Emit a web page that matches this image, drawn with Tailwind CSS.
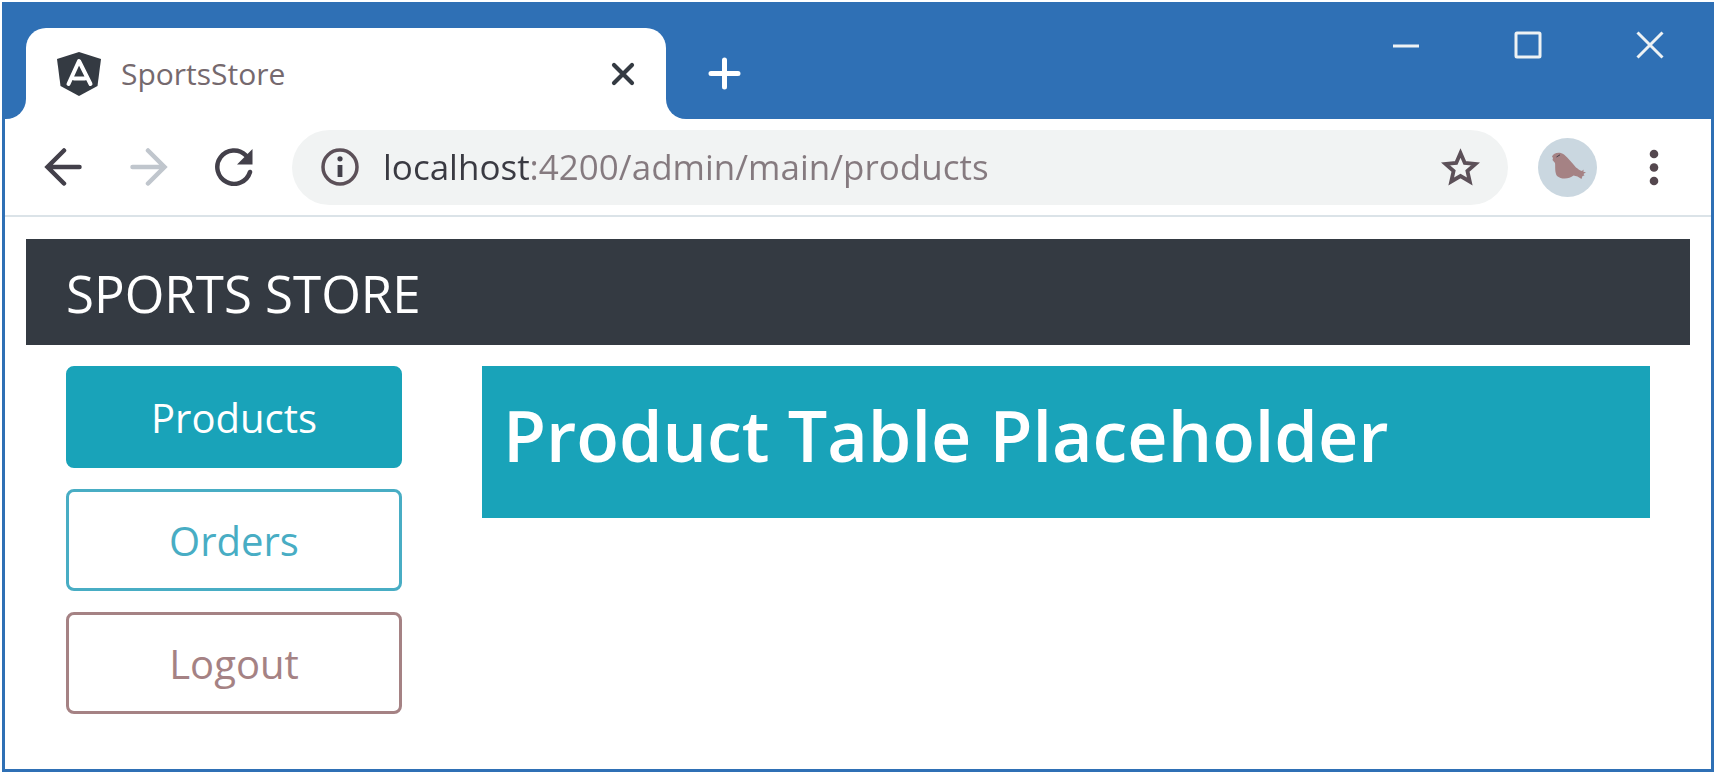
<!DOCTYPE html>
<html lang="en">
<head>
<meta charset="utf-8">
<meta name="viewport" content="width=device-width, initial-scale=1">
<title>SportsStore</title>
<script src="https://cdn.jsdelivr.net/npm/@tailwindcss/browser@4"></script>
</head>
<body class="flex min-h-screen bg-white p-[2px] font-['Open_Sans','Noto_Sans',sans-serif]">
<div class="flex grow flex-col border-3 border-[#2f70b5] bg-white">

  <!-- Title bar -->
  <header class="flex h-[114px] bg-[#2f70b5]">
    <div class="mt-[23px] w-[21px] shrink-0 bg-white"><div class="h-full rounded-br-[20px] bg-[#2f70b5]"></div></div>
    <div class="mt-[23px] flex w-[640px] items-center rounded-t-[20px] bg-white pr-[31px] pl-[31px]">
      <svg class="size-[44px] shrink-0" viewBox="0 0 44 44" aria-hidden="true">
        <path d="M22 0 44 7 40.500 34 22 44 3.500 34 0 7Z" fill="#343a42"/>
        <path d="M11.500 32 22 9 33.500 32M17 26.500H28" fill="none" stroke="#fff" stroke-width="4" stroke-linecap="round" stroke-linejoin="round"/>
      </svg>
      <span class="ml-5 grow text-[30px] leading-10 text-[#75696e]">SportsStore</span>
      <button type="button" aria-label="Close tab" class="shrink-0">
        <svg class="size-[24px]" viewBox="0 0 24 24"><path d="M3 3 21 21M21 3 3 21" stroke="#343a42" stroke-width="4.200" stroke-linecap="round"/></svg>
      </button>
    </div>
    <div class="grow bg-white">
      <div class="flex h-full items-start justify-between rounded-bl-[20px] bg-[#2f70b5]">
        <button type="button" aria-label="New tab" class="mt-[23px] ml-[42px] flex h-[91px] items-center">
          <svg class="size-[33px]" viewBox="0 0 33 33"><path d="M16.500 3V30M3 16.500H30" stroke="#fff" stroke-width="5" stroke-linecap="round"/></svg>
        </button>
        <div class="flex">
          <button type="button" aria-label="Minimize" class="flex h-20 w-[122px] items-center justify-center">
            <svg class="size-[28px]" viewBox="0 0 28 28"><path d="M1 15H27" stroke="#eef2f4" stroke-width="3"/></svg>
          </button>
          <button type="button" aria-label="Maximize" class="flex h-20 w-[122px] items-center justify-center">
            <svg class="size-[28px]" viewBox="0 0 28 28"><rect x="2" y="2" width="24" height="24" rx="1" fill="none" stroke="#eef2f4" stroke-width="3"/></svg>
          </button>
          <button type="button" aria-label="Close" class="flex h-20 w-[122px] items-center justify-center">
            <svg class="size-[28px]" viewBox="0 0 28 28"><path d="M1.500 1.500 26.500 26.500M26.500 1.500 1.500 26.500" stroke="#eef2f4" stroke-width="3"/></svg>
          </button>
        </div>
      </div>
    </div>
  </header>

  <!-- Toolbar -->
  <div class="flex h-[98px] items-center border-b-2 border-[#dbe3e8] pr-[52px] pl-[39px]">
    <button type="button" aria-label="Back" class="shrink-0">
      <svg class="size-[38px]" viewBox="0 0 38 38" fill="none" stroke="#43404a" stroke-width="4.500" stroke-linecap="round" stroke-linejoin="miter"><path d="M35.500 19H4M20 2.500 3.500 19 20 35.500"/></svg>
    </button>
    <button type="button" aria-label="Forward" class="ml-12 shrink-0">
      <svg class="size-[38px]" viewBox="0 0 38 38" fill="none" stroke="#c0c6cd" stroke-width="4.500" stroke-linecap="round"><path d="M2.500 19H34M18 2.500 34.500 19 18 35.500"/></svg>
    </button>
    <button type="button" aria-label="Reload" class="ml-[47px] shrink-0">
      <svg class="size-[38px]" viewBox="0 0 38 38"><path d="M35 24A16.700 16.700 0 1 1 31 7.500" fill="none" stroke="#43404a" stroke-width="4.500" stroke-linecap="round"/><path d="M37.500 1V16.500H22Z" fill="#43404a"/></svg>
    </button>
    <div class="ml-[39px] flex h-[75px] min-w-0 grow items-center rounded-full bg-[#f1f3f3] pr-[28px] pl-[29px]">
      <button type="button" aria-label="Site information" class="shrink-0">
        <svg class="size-[38px]" viewBox="0 0 38 38"><circle cx="19" cy="19" r="17" fill="none" stroke="#5c5058" stroke-width="3.500"/><circle cx="19" cy="10.800" r="2.600" fill="#43404a"/><path d="M19 17V29" stroke="#43404a" stroke-width="4.800"/></svg>
      </button>
      <input type="text" aria-label="Address" value="localhost:4200/admin/main/products" class="ml-6 min-w-0 grow bg-linear-to-r from-[#3a3a42] from-[148px] to-[#857a7f] to-[148px] bg-clip-text text-[35px] leading-[48px] text-transparent outline-none">
      <button type="button" aria-label="Bookmark" class="shrink-0">
        <svg class="size-[39px]" viewBox="0 0 39 39"><path d="M19.500 5 23.800 14.900 34.500 15.900 26.400 23 28.800 33.500 19.500 28 10.200 33.500 12.600 23 4.500 15.900 15.200 14.900Z" fill="none" stroke="#5c5058" stroke-width="3.800"/></svg>
      </button>
    </div>
    <button type="button" aria-label="Profile" class="ml-[30px] shrink-0">
      <svg class="size-[59px]" viewBox="0 0 59 59"><circle cx="29.500" cy="29.500" r="29.500" fill="#cad7e0"/><path d="M14 18.500C15.500 14.500 22 13.500 26 16.500C30.500 20 34 25 38 29.500C40 31 42 32.500 44 33L45.500 31.500L45.500 34L48 34L45.500 36L46.500 37.500L44.500 38L43.500 41L39.500 38.500L35.500 37.500C31 41.500 23 41.500 19 38C16.500 34 17.500 28 17 25L14.500 22L15 20Z" fill="#a58284"/><path d="M18.500 19 22 16.800" stroke="#43404a" stroke-width="1"/></svg>
    </button>
    <button type="button" aria-label="Menu" class="ml-[52px] shrink-0">
      <svg class="h-[38px] w-[10px]" viewBox="0 0 10 38" fill="#54474e"><circle cx="5" cy="6" r="4.300"/><circle cx="5" cy="19.500" r="4.300"/><circle cx="5" cy="33" r="4.300"/></svg>
    </button>
  </div>

  <!-- Admin page -->
  <div class="px-[21px] pt-[22px]">
    <div class="bg-[#343a42] px-10 pt-[22px] pb-5 text-[51px] leading-[64px] text-white"><a href="#">SPORTS STORE</a></div>
    <div class="mt-[21px] flex items-start gap-20 px-10">
      <nav aria-label="Admin" class="flex w-[336px] shrink-0 flex-col gap-[21px] text-[40px] leading-[56px]">
        <button type="button" class="rounded-lg border-3 border-[#19a3b9] bg-[#19a3b9] pt-[21px] pb-[19px] text-white">Products</button>
        <button type="button" class="rounded-lg border-3 border-[#48adc4] pt-[21px] pb-[19px] text-[#48adc4]">Orders</button>
        <button type="button" class="rounded-lg border-3 border-[#a58284] pt-[21px] pb-[19px] text-[#a58284]">Logout</button>
      </nav>
      <main class="min-w-0 grow bg-[#19a3b9] px-[21px] pt-[19px] pb-[33px]">
        <h1 class="text-[70px] leading-[100px] font-semibold text-white">Product Table Placeholder</h1>
      </main>
    </div>
  </div>
</div>
</body>
</html>
